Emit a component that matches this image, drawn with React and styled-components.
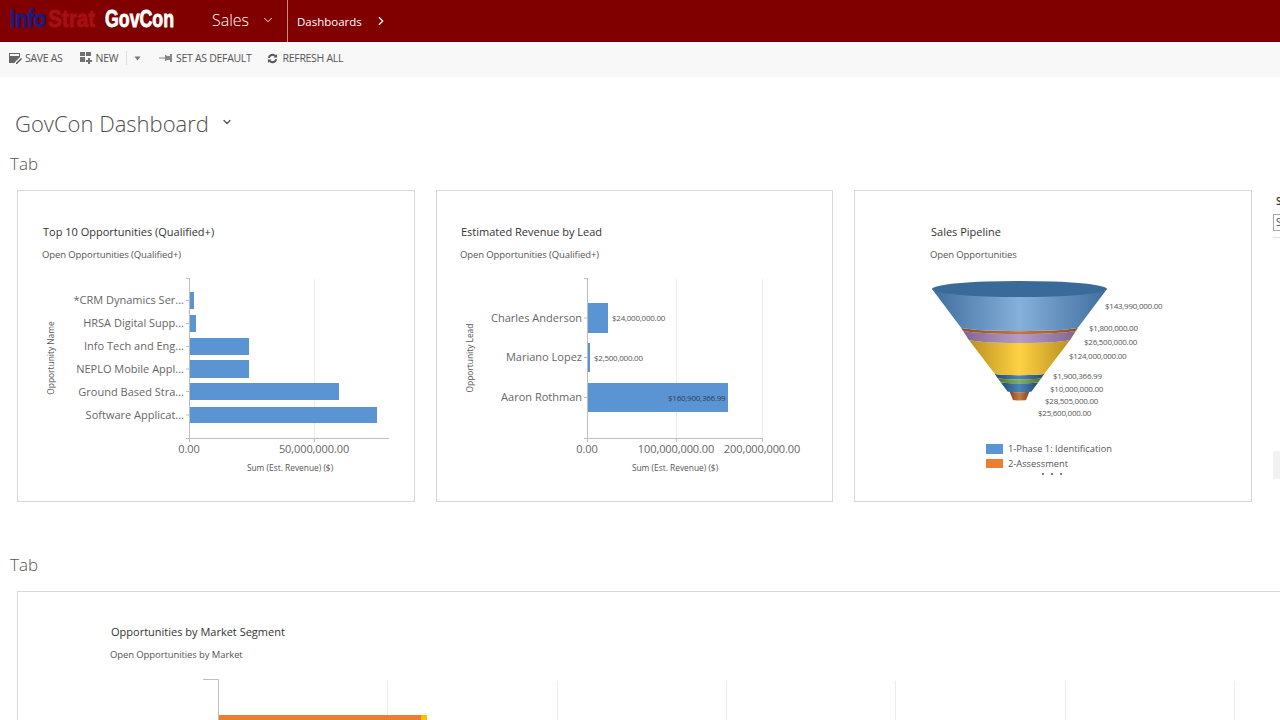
import React from 'react'
import styled, { createGlobalStyle } from 'styled-components'
import { ChevronDown, ChevronRight } from 'lucide-react'

const GlobalStyle = createGlobalStyle`
    html, body {
        margin: 0;
        height: 720px;
        overflow: hidden;
        background: #fff;
        font-family: "Open Sans", "Noto Sans", sans-serif;
    }
`

const Page = styled.div`
    width: 1280px;
    height: 720px;
    overflow: hidden;
`

const NavBar = styled.header`
    height: 42px;
    background: #800000;
    display: flex;
    align-items: center;
    color: #fff;
`

const Logo = styled.div`
    width: 212px;
    flex: none;
    padding: 0 0 5px 10px;
    box-sizing: border-box;
    display: flex;
    font-family: "Liberation Sans", sans-serif;
    font-weight: 700;
    font-size: 24px;
    line-height: 37px;
    height: 42px;
    -webkit-text-stroke: 0.8px currentColor;
`

// the logo face is a condensed one, so the words get squeezed sideways
const LogoWord = styled.span`
    display: inline-block;
    width: ${({ $width }) => $width}px;
    color: ${({ $color }) => $color};
    transform: scaleX(${({ $squeeze }) => $squeeze});
    transform-origin: left center;
    white-space: nowrap;
`

const NavArea = styled.div`
    display: flex;
    align-items: center;
    gap: 12px;
    width: 75px;
    height: 42px;
    padding-bottom: 2px;
    box-sizing: border-box;
    font-size: 16px;
    font-weight: 300;
`

const NavCrumb = styled.div`
    display: flex;
    align-items: center;
    gap: 12px;
    height: 42px;
    padding-left: 9px;
    border-left: 1px solid #c78a8a;
    font-size: 11.5px;
`

const Toolbar = styled.div`
    height: 35px;
    padding: 0 0 3px 8px;
    box-sizing: border-box;
    background: #f8f8f8;
    display: flex;
    align-items: center;
    color: #555;
`

const ToolButton = styled.div`
    display: flex;
    align-items: center;
    gap: ${({ $iconGap }) => $iconGap || 3}px;
    margin-right: ${({ $gap }) => $gap}px;
    font-size: 10.5px;
    letter-spacing: -0.3px;
    white-space: nowrap;
`

const ToolDivider = styled.div`
    width: 1px;
    height: 14px;
    background: #ddd;
    margin-right: 7px;
`

const Main = styled.main`
    padding: 29px 0 0 10px;
`

const TitleRow = styled.div`
    display: flex;
    align-items: center;
    gap: 12px;
    padding-left: 5px;
    height: 32px;
    color: #505050;
`

const Title = styled.h1`
    margin: 0;
    padding-top: 1px;
    font-size: 22px;
    font-weight: 300;
    line-height: 32px;
    color: #505050;
`

const TabLabel = styled.h2`
    margin: ${({ $top }) => $top}px 0 14px;
    font-size: 17px;
    font-weight: 300;
    line-height: 24px;
    color: #555;
`

const CardRow = styled.div`
    display: flex;
    gap: 21px;
    padding-left: 7px;
    width: 1500px;
`

const Card = styled.section`
    width: ${({ $width }) => $width || 398}px;
    height: 312px;
    flex: none;
    box-sizing: border-box;
    border: 1px solid #d8d8d8;
    background: #fff;
    overflow: hidden;
`

const CardHead = styled.div`
    padding: ${({ $top }) => $top || 33}px 0 0 ${({ $indent }) => $indent}px;
    height: 74px;
    box-sizing: border-box;
`

const CardTitle = styled.div`
    font-size: 11px;
    line-height: 16px;
    color: #333;
    white-space: nowrap;
`

const CardSub = styled.div`
    margin: 8px 0 0 -1px;
    font-size: 9.5px;
    line-height: 13px;
    letter-spacing: -0.1px;
    color: #555;
    white-space: nowrap;
`

const ChartSvg = styled.svg`
    display: block;
    font-family: "Open Sans", "Noto Sans", sans-serif;
`

const SidePanel = styled.aside`
    width: 200px;
    height: 312px;
    flex: none;
    display: flex;
    flex-direction: column;
`

const SideLabel = styled.div`
    margin: 4px 0 0 3px;
    height: 14px;
    font-size: 10px;
    line-height: 14px;
    font-weight: 600;
    color: #333;
`

const SideInput = styled.div`
    margin-top: 6px;
    height: 17px;
    box-sizing: border-box;
    border: 1px solid #aaa;
    font-size: 10px;
    line-height: 15px;
    padding-left: 2px;
    color: #555;
`

const SideRule = styled.div`
    margin-top: 6px;
    height: 1px;
    background: #ddd;
`

const SideBlock = styled.div`
    margin-top: 213px;
    height: 28px;
    background: #f2f2f2;
`

const AxisTick = styled.text`
    font-size: 11px;
    letter-spacing: -0.1px;
    fill: #666;
`

const AxisTitle = styled.text`
    font-size: 8.4px;
    fill: #555;
`

const ValueLabel = styled.text`
    font-size: 8px;
    letter-spacing: -0.25px;
    fill: ${({ $dark }) => ($dark ? '#2f3f55' : '#555')};
`

const LegendText = styled.text`
    font-size: 9.3px;
    fill: #555;
`

const BAR = '#5b94d3'
const AXIS = '#bdbdbd'
const GRID = '#ececec'

const SaveIcon = () => (
    <svg width="14" height="14" viewBox="0 0 14 14">
        <path d="M1 2h11v3h-1V3H2v2h10v1l-5 5-.5 1H1z" fill="#666" />
        <path d="M8 12l5-5 1 1-5 5H8z" fill="#555" />
    </svg>
)

const NewIcon = () => (
    <svg width="14" height="14" viewBox="0 0 14 14" fill="#707070">
        <rect x="1" y="1" width="5" height="4" />
        <rect x="7" y="1" width="5" height="4" />
        <rect x="1" y="6" width="5" height="5" />
        <path d="M9 7h2v2h2v2h-2v2H9v-2H7V9h2z" />
    </svg>
)

const PinIcon = () => (
    <svg width="14" height="10" viewBox="0 0 14 10" fill="#888">
        <path d="M0 4.5h7v1H0z" />
        <path d="M6 2h1l1 1h3V1h2v8h-2V7H8L7 8H6z" />
    </svg>
)

const RefreshIcon = () => (
    <svg width="11" height="11" viewBox="0 0 12 12" fill="none" stroke="#555" strokeWidth="2.2">
        <path d="M2 5.4A4 4 0 0 1 9 3.4" />
        <path d="M10 6.6A4 4 0 0 1 3 8.6" />
        <path d="M11 1v4H7z" fill="#555" stroke="none" />
        <path d="M1 11V7h4z" fill="#555" stroke="none" />
    </svg>
)

const Caret = () => (
    <svg width="7" height="5" viewBox="0 0 7 5">
        <path d="M0.5 0.5h6L3.5 4.5z" fill="#777" />
    </svg>
)

// every chart uses page coordinates through its viewBox, easier to read off the screenshot
const HBarChart = ({ x0, title, ticks, rows, labelSize, titleX, sumX, axisEnd }) => (
    <ChartSvg width="396" height="236" viewBox={`${x0} 265 396 236`}>
        {ticks.map((t, i) => (
            <g key={t.label}>
                {i > 0 && <line x1={t.x + 0.5} y1="279" x2={t.x + 0.5} y2="438" stroke={GRID} />}
                <line x1={t.x + 0.5} y1="438" x2={t.x + 0.5} y2="442" stroke={AXIS} />
                <AxisTick x={t.x} y="453" textAnchor="middle">{t.label}</AxisTick>
            </g>
        ))}
        <line x1={rows.axis - 4} y1="278.5" x2={rows.axis} y2="278.5" stroke={AXIS} />
        <line x1={rows.axis - 0.5} y1="278" x2={rows.axis - 0.5} y2="442" stroke={AXIS} />
        <line x1={rows.axis - 4} y1="438.5" x2={axisEnd} y2="438.5" stroke={AXIS} />
        {rows.items.map(r => (
            <g key={r.label}>
                <rect x={rows.axis} y={r.top} width={r.end - rows.axis} height={r.h} fill={BAR} />
                <line x1={rows.axis - 4} y1={r.top + r.h / 2} x2={rows.axis - 1} y2={r.top + r.h / 2} stroke={AXIS} />
                <text
                    x={rows.axis - 6}
                    y={r.top + r.h / 2 + (r.dy || 4)}
                    textAnchor="end"
                    fontSize={labelSize}
                    fill="#666"
                >
                    {r.label}
                </text>
                {r.value && (
                    <ValueLabel x={r.valueX} y={r.top + r.h / 2 + 3} $dark={r.dark}>{r.value}</ValueLabel>
                )}
            </g>
        ))}
        <AxisTitle
            x={titleX}
            y="358"
            textAnchor="middle"
            transform={`rotate(-90 ${titleX} 358)`}
        >
            {title}
        </AxisTitle>
        <AxisTitle x={sumX} y="471" textAnchor="middle">Sum (Est. Revenue) ($)</AxisTitle>
    </ChartSvg>
)

const topRows = {
    axis: 190,
    items: [
        { label: '*CRM Dynamics Ser...', top: 292, h: 17, end: 194, dy: 3 },
        { label: 'HRSA Digital Supp...', top: 315, h: 17, end: 196, dy: 3 },
        { label: 'Info Tech and Eng...', top: 338, h: 17, end: 249, dy: 3 },
        { label: 'NEPLO Mobile Appl...', top: 360, h: 18, end: 249 },
        { label: 'Ground Based Stra...', top: 383, h: 17, end: 339 },
        { label: 'Software Applicat...', top: 407, h: 16, end: 377 },
    ],
}

const leadRows = {
    axis: 588,
    items: [
        { label: 'Charles Anderson', top: 303, h: 30, end: 608, value: '$24,000,000.00', valueX: 612 },
        { label: 'Mariano Lopez', top: 343, h: 29, end: 590, value: '$2,500,000.00', valueX: 594, dy: 3 },
        { label: 'Aaron Rothman', top: 383, h: 29, end: 728, value: '$160,900,366.99', valueX: 668, dark: true, dy: 3 },
    ],
}

const CX = 1019.5

// y/w are the edge height and half width at the foot of each band, drawn bottom first
// so that the front bulge of a band lies over the one below it
const segments = [
    { y1: 289, w1: 87.5, y2: 327, w2: 59, fill: 'url(#fBlue)' },
    { y1: 327, w1: 59, y2: 330, w2: 57, fill: 'url(#fBrown)' },
    { y1: 330, w1: 57, y2: 339.5, w2: 51, fill: 'url(#fPurple)' },
    { y1: 339.5, w1: 51, y2: 373.5, w2: 25, fill: 'url(#fYellow)' },
    { y1: 373.5, w1: 25, y2: 378, w2: 22, fill: 'url(#fNavy)' },
    { y1: 378, w1: 22, y2: 382, w2: 19, fill: 'url(#fGreen)' },
    { y1: 382, w1: 19, y2: 391.5, w2: 12, fill: 'url(#fNavy)' },
    { y1: 391.5, w1: 10, y2: 400, w2: 6.5, fill: 'url(#fCopper)' },
]

const funnelStops = {
    fBlue: ['#3f6d9c', '#86b0dc', '#3f6d9c'],
    fBrown: ['#8c4f25', '#c9743a', '#8c4f25'],
    fPurple: ['#7f6590', '#b79cc7', '#7f6590'],
    fYellow: ['#b98f1f', '#fdd243', '#b98f1f'],
    fNavy: ['#234a72', '#4f83b8', '#234a72'],
    fGreen: ['#4c7430', '#7fb455', '#4c7430'],
    fCopper: ['#7f4520', '#c77b42', '#7f4520'],
}

const funnelLabels = [
    ['$143,990,000.00', 1105, 309],
    ['$1,800,000.00', 1089, 331],
    ['$26,500,000.00', 1084, 345],
    ['$124,000,000.00', 1069, 359],
    ['$1,900,366.99', 1053, 379],
    ['$10,000,000.00', 1050, 392],
    ['$28,505,000.00', 1045, 404],
    ['$25,600,000.00', 1038, 416],
]

const FunnelChart = () => (
    <ChartSvg width="396" height="236" viewBox="855 265 396 236">
        <defs>
            {Object.entries(funnelStops).map(([id, [a, b, c]]) => (
                <linearGradient key={id} id={id}>
                    <stop offset="0" stopColor={a} />
                    <stop offset="0.5" stopColor={b} />
                    <stop offset="1" stopColor={c} />
                </linearGradient>
            ))}
        </defs>
        {[...segments].reverse().map(s => {
            const r1 = s.w1 * 0.07
            const r2 = s.w2 * 0.07
            return (
                <path
                    key={s.y1}
                    fill={s.fill}
                    d={`M${CX - s.w1} ${s.y1} L${CX - s.w2} ${s.y2} A${s.w2} ${r2} 0 0 0 ${CX + s.w2} ${s.y2} L${CX + s.w1} ${s.y1} A${s.w1} ${r1} 0 0 1 ${CX - s.w1} ${s.y1}z`}
                />
            )
        })}
        <ellipse cx={CX} cy="289" rx="87.5" ry="8" fill="#3a6a99" />
        {funnelLabels.map(([text, x, y]) => (
            <ValueLabel key={text} x={x} y={y}>{text}</ValueLabel>
        ))}
        <rect x="986" y="444" width="17" height="10" fill={BAR} />
        <LegendText x="1008" y="452">1-Phase 1: Identification</LegendText>
        <rect x="986" y="459" width="17" height="9" fill="#ed7d31" />
        <LegendText x="1008" y="467">2-Assessment</LegendText>
        {[1043, 1052, 1061].map(x => (
            <circle key={x} cx={x} cy="474" r="1" fill="#555" />
        ))}
    </ChartSvg>
)

const MarketChart = () => (
    <ChartSvg width="1400" height="236" viewBox="18 665 1400 236">
        {[387, 557, 726, 895, 1065, 1234].map(x => (
            <line key={x} x1={x + 0.5} y1="680" x2={x + 0.5} y2="720" stroke={GRID} />
        ))}
        <path d="M203 678.5H218.5V720" fill="none" stroke={AXIS} />
        <rect x="219" y="714" width="202" height="10" fill="#ed7d31" />
        <rect x="421" y="714" width="6" height="10" fill="#ffc000" />
    </ChartSvg>
)

export default function App() {
    return (
        <Page>
            <GlobalStyle />
            <NavBar>
                <Logo>
                    <LogoWord $color="#1a1a80" $width={38} $squeeze={0.82}>Info</LogoWord>
                    <LogoWord $color="#a80f14" $width={57} $squeeze={0.86}>Strat</LogoWord>
                    <LogoWord $color="#fff" $width={70} $squeeze={0.74}>GovCon</LogoWord>
                </Logo>
                <NavArea>
                    Sales
                    <ChevronDown size={14} strokeWidth={1.5} />
                </NavArea>
                <NavCrumb>
                    Dashboards
                    <ChevronRight size={14} strokeWidth={2} />
                </NavCrumb>
            </NavBar>
            <Toolbar>
                <ToolButton $gap={16}><SaveIcon />SAVE AS</ToolButton>
                <ToolButton $gap={8}><NewIcon />NEW</ToolButton>
                <ToolDivider />
                <ToolButton $gap={18}><Caret /></ToolButton>
                <ToolButton $gap={15}><PinIcon />SET AS DEFAULT</ToolButton>
                <ToolButton $gap={0} $iconGap={5}><RefreshIcon />REFRESH ALL</ToolButton>
            </Toolbar>
            <Main>
                <TitleRow>
                    <Title>GovCon Dashboard</Title>
                    <ChevronDown size={12} strokeWidth={2.5} />
                </TitleRow>
                <TabLabel $top={14}>Tab</TabLabel>
                <CardRow>
                    <Card>
                        <CardHead $indent={25}>
                            <CardTitle>Top 10 Opportunities (Qualified+)</CardTitle>
                            <CardSub>Open Opportunities (Qualified+)</CardSub>
                        </CardHead>
                        <HBarChart
                            x0={18}
                            title="Opportunity Name"
                            titleX={54}
                            sumX={290}
                            labelSize={11}
                            rows={topRows}
                            axisEnd={389}
                            ticks={[{ x: 189, label: '0.00' }, { x: 314, label: '50,000,000.00' }]}
                        />
                    </Card>
                    <Card $width={397}>
                        <CardHead $indent={24}>
                            <CardTitle>Estimated Revenue by Lead</CardTitle>
                            <CardSub>Open Opportunities (Qualified+)</CardSub>
                        </CardHead>
                        <HBarChart
                            x0={437}
                            title="Opportunity Lead"
                            titleX={473}
                            sumX={675}
                            labelSize={11}
                            rows={leadRows}
                            axisEnd={763}
                            ticks={[
                                { x: 587, label: '0.00' },
                                { x: 676, label: '100,000,000.00' },
                                { x: 762, label: '200,000,000.00' },
                            ]}
                        />
                    </Card>
                    <Card>
                        <CardHead $indent={76}>
                            <CardTitle>Sales Pipeline</CardTitle>
                            <CardSub>Open Opportunities</CardSub>
                        </CardHead>
                        <FunnelChart />
                    </Card>
                    <SidePanel>
                        <SideLabel>S</SideLabel>
                        <SideInput>S</SideInput>
                        <SideRule />
                        <SideBlock />
                    </SidePanel>
                </CardRow>
                <TabLabel $top={51}>Tab</TabLabel>
                <CardRow>
                    <Card $width={1500}>
                        <CardHead $indent={93} $top={32}>
                            <CardTitle>Opportunities by Market Segment</CardTitle>
                            <CardSub>Open Opportunities by Market</CardSub>
                        </CardHead>
                        <MarketChart />
                    </Card>
                </CardRow>
            </Main>
        </Page>
    )
}
